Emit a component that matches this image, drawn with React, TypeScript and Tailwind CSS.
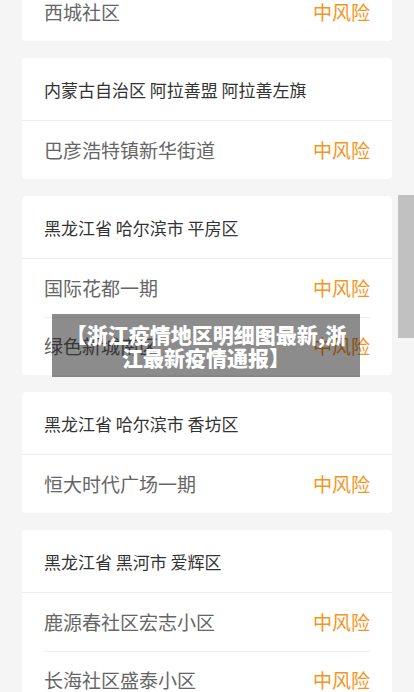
import React from "react";

type Area = {
  title?: string;
  places: string[];
};

const areas: Area[] = [
  { places: ["西城社区"] },
  { title: "内蒙古自治区 阿拉善盟 阿拉善左旗", places: ["巴彦浩特镇新华街道"] },
  { title: "黑龙江省 哈尔滨市 平房区", places: ["国际花都一期", "绿色新城南区"] },
  { title: "黑龙江省 哈尔滨市 香坊区", places: ["恒大时代广场一期"] },
  { title: "黑龙江省 黑河市 爱辉区", places: ["鹿源春社区宏志小区", "长海社区盛泰小区"] },
];

const App = () => {
  return (
    <div
      className="relative h-[692px] w-full overflow-hidden bg-[#f5f5f5]"
      style={{ fontFamily: '"Noto Sans CJK SC", "Noto Sans", sans-serif' }}
    >
      {/* --- Risk area list --- */}
      <div className="-mt-[17px] flex flex-col gap-[17px] px-[22px]">
        {areas.map((area, i) => (
          <div key={i} className="rounded-[4px] bg-white">
            {area.title && (
              <div className="flex h-[63px] items-center border-b border-[#eeeeee] px-[22px] pt-[2px] text-[17px] text-[#333333]">
                {area.title}
              </div>
            )}
            {area.places.map((place, j) => (
              <div
                key={j}
                className={`mx-[22px] flex h-[58px] items-center justify-between text-[19px] ${
                  j > 0 ? "border-t border-[#eeeeee]" : ""
                }`}
              >
                <span className="text-[#666666]">{place}</span>
                <span className="text-[#f7941d]">中风险</span>
              </div>
            ))}
          </div>
        ))}
      </div>

      {/* --- Scrollbar thumb --- */}
      <div className="absolute left-[398px] top-[195px] h-[143px] w-[16px] bg-[#c1c1c1]" />

      {/* --- Title overlay --- */}
      <div className="absolute left-[52px] top-[314px] flex h-[63px] w-[308px] items-center justify-center bg-black/45 px-[10px]">
        <p className="text-center text-[21px] font-black leading-[23px] text-white">
          【浙江疫情地区明细图最新,浙江最新疫情通报】
        </p>
      </div>
    </div>
  );
};

export default App;
